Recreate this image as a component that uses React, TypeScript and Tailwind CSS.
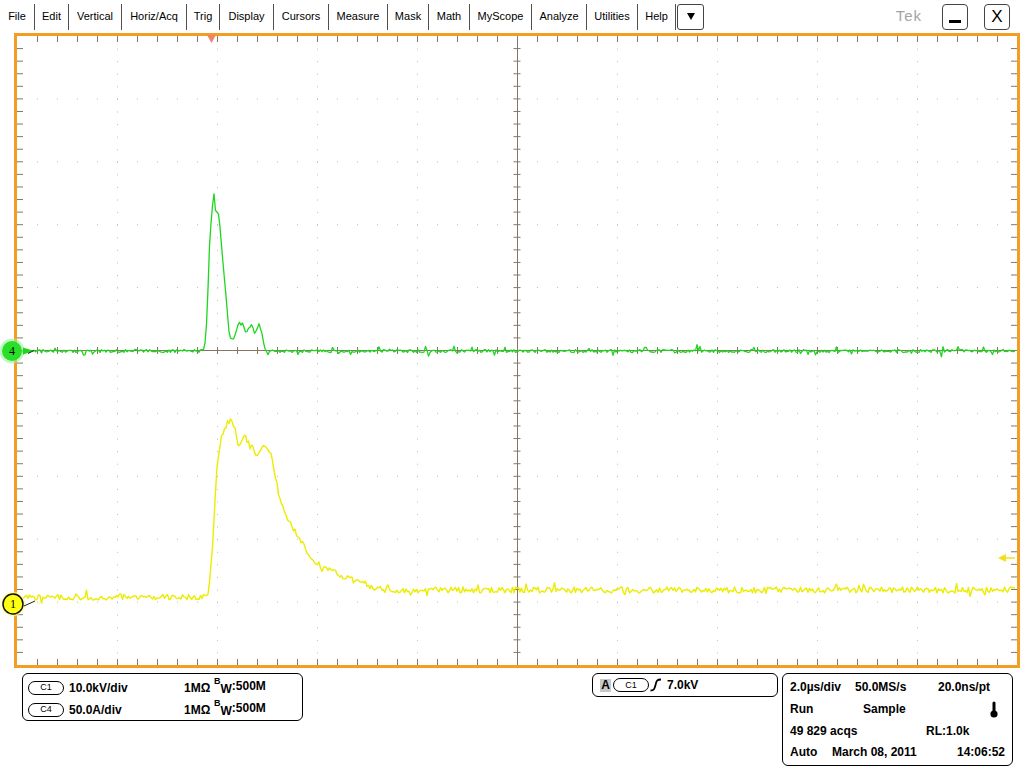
import React from 'react';

// Layout of the scope display (inner graticule area, in px)
const GW = 1000;
const GH = 629;
const OX = 17; // page x of graticule origin
const OY = 36; // page y of graticule origin
const DIV_X = GW / 10;
const DIV_Y = GH / 10;

const MENU: [string, string][] = [
  ['File', 'w-[34px]'],
  ['Edit', 'w-[33px]'],
  ['Vertical', 'w-[52px]'],
  ['Horiz/Acq', 'w-[64px]'],
  ['Trig', 'w-[32px]'],
  ['Display', 'w-[53px]'],
  ['Cursors', 'w-[54px]'],
  ['Measure', 'w-[58px]'],
  ['Mask', 'w-[40px]'],
  ['Math', 'w-[40px]'],
  ['MyScope', 'w-[61px]'],
  ['Analyze', 'w-[54px]'],
  ['Utilities', 'w-[50px]'],
  ['Help', 'w-[37px]'],
];

const rng = (seed: number) => () => {
  seed = (seed + 0x6d2b79f5) | 0;
  let t = Math.imul(seed ^ (seed >>> 15), 1 | seed);
  t = (t + Math.imul(t ^ (t >>> 7), 61 | t)) ^ t;
  return ((t ^ (t >>> 14)) >>> 0) / 4294967296;
};

const interp = (pts: number[][], x: number) => {
  for (let i = 0; i < pts.length - 1; i++) {
    const [x0, y0] = pts[i];
    const [x1, y1] = pts[i + 1];
    if (x >= x0 && x <= x1) return y0 + ((y1 - y0) * (x - x0)) / (x1 - x0);
  }
  return pts[pts.length - 1][1];
};

const greenPulse = [
  [204, 351], [206, 335], [208, 290], [210, 232], [212, 213], [213, 200], [214, 192], [215, 204],
  [216, 214], [218, 209], [220, 228], [222, 253], [225, 285], [227, 310], [229, 330], [231, 340],
  [234, 338], [236, 334], [239, 323], [241, 327], [243, 322], [245, 330], [247, 333], [249, 327],
  [252, 326], [254, 333], [256, 333], [258, 326], [260, 324], [262, 335], [265, 347], [267, 351],
];

const yellowPulse = [
  [207, 597], [209, 590], [211, 565], [213, 540], [215, 500], [217, 467], [219, 450], [221, 440],
  [223, 433], [226, 427], [228, 422], [230, 419], [232, 424], [235, 430], [238, 447], [241, 440],
  [245, 437], [248, 443], [250, 445], [253, 448], [257, 455], [260, 450], [264, 446], [267, 447],
  [270, 452], [272, 455], [274, 470], [278, 490], [282, 507], [286, 515], [290, 523], [295, 532],
  [300, 540], [305, 548], [310, 557], [316, 562], [323, 567], [333, 572], [343, 577], [353, 580],
  [363, 583], [373, 587], [383, 590],
];

const buildGreen = () => {
  const r = rng(41);
  const out: string[] = [];
  for (let x = 22; x <= 1016; x += 1.5) {
    let y: number;
    if (x >= 204 && x <= 267) y = interp(greenPulse, x) + (r() - 0.5) * 4;
    else {
      y = 351 + (r() - 0.5) * 3;
      if (r() < 0.07) y += (r() < 0.6 ? -1 : 1) * (2 + r() * 3);
    }
    out.push(`${(x - OX).toFixed(1)},${(y - OY).toFixed(1)}`);
  }
  return out.join(' ');
};

const buildYellow = () => {
  const r = rng(7);
  const out: string[] = [];
  for (let x = 22; x <= 1016; x += 1.5) {
    let y: number;
    if (x < 207) y = 597;
    else if (x > 383) y = 590;
    else y = interp(yellowPulse, x);
    y += (r() - 0.5) * 6;
    if (r() < 0.1) y += (r() - 0.5) * 11;
    out.push(`${(x - OX).toFixed(1)},${(y - OY).toFixed(1)}`);
  }
  return out.join(' ');
};

const Graticule: React.FC = () => {
  const green = buildGreen();
  const yellow = buildYellow();
  const grid = '#bcbcbc';
  const axis = '#857768';
  const ticks: JSX.Element[] = [];
  for (let m = 1; m < 50; m++) {
    const x = m * 20 + 0.5;
    const y = m * (GH / 50);
    ticks.push(<line key={`t${m}`} x1={x} y1={0} x2={x} y2={6} />);
    ticks.push(<line key={`b${m}`} x1={x} y1={GH - 6} x2={x} y2={GH} />);
    ticks.push(<line key={`l${m}`} x1={0} y1={y} x2={6} y2={y} />);
    ticks.push(<line key={`r${m}`} x1={GW - 6} y1={y} x2={GW} y2={y} />);
    ticks.push(<line key={`cx${m}`} x1={x} y1={GH / 2 - 3.5} x2={x} y2={GH / 2 + 3.5} />);
    ticks.push(<line key={`cy${m}`} x1={GW / 2 - 3.5} y1={y} x2={GW / 2 + 3.5} y2={y} />);
  }
  const dotted: JSX.Element[] = [];
  for (let k = 1; k < 10; k++) {
    if (k === 5) continue;
    dotted.push(
      <line key={`h${k}`} x1={0} y1={k * DIV_Y} x2={GW} y2={k * DIV_Y} strokeDasharray={`1 19`} />,
    );
    dotted.push(
      <line key={`v${k}`} x1={k * DIV_X + 0.5} y1={0} x2={k * DIV_X + 0.5} y2={GH} strokeDasharray={`1 ${GH / 50 - 1}`} />,
    );
  }

  return (
    <svg width={GW} height={GH} viewBox={`0 0 ${GW} ${GH}`} className="block overflow-visible">
      <g stroke={grid} strokeWidth={1}>{dotted}</g>
      <g stroke={axis} strokeWidth={1}>
        <line x1={GW / 2 + 0.5} y1={0} x2={GW / 2 + 0.5} y2={GH} />
        <line x1={0} y1={GH / 2} x2={GW} y2={GH / 2} />
        {ticks}
      </g>
      <polyline points={green} fill="none" stroke="#1fd61f" strokeWidth={1.3} strokeLinejoin="round" />
      <polyline points={yellow} fill="none" stroke="#ecec00" strokeWidth={1.4} strokeLinejoin="round" />
      {/* trigger position */}
      <polygon points="190,-1 199,-1 194.5,7" fill="#f3826c" />
      {/* trigger level */}
      <g>
        <line x1={986} y1={522} x2={998} y2={522} stroke="#f0e020" strokeWidth={1.5} />
        <polygon points="981,522 989,518 989,526" fill="#f0e020" />
      </g>
    </svg>
  );
};

const ChannelMarker: React.FC<{ n: string; fill: string; glow: string; ring?: boolean; arrow: 'green' | 'yellow' }> = ({
  n,
  fill,
  glow,
  ring,
  arrow,
}) => (
  <svg width="40" height="28" viewBox="0 0 40 28" className="block overflow-visible">
    <circle cx="12" cy="14" r="12.5" fill={glow} opacity="0.6" />
    <circle cx="12" cy="14" r="10" fill={fill} stroke={ring ? '#111' : 'none'} strokeWidth={ring ? 1.5 : 0} />
    <text x="12" y="18" textAnchor="middle" fontSize="12" fontFamily="Liberation Serif, serif" fill="#000">
      {n}
    </text>
    {arrow === 'green' ? (
      <g>
        <polygon points="23,10.5 34,14 23,17.5" fill="#1fd61f" />
        <line x1="28" y1="16.5" x2="34" y2="13.5" stroke="#222" strokeWidth="1" />
      </g>
    ) : (
      <line x1="23" y1="16" x2="34" y2="11" stroke="#222" strokeWidth="1" />
    )}
  </svg>
);

const Pill: React.FC<{ label: string }> = ({ label }) => (
  <span className="inline-flex items-center justify-center w-[36px] h-[14px] rounded-full border border-black text-[9px] font-normal leading-none shrink-0">
    {label}
  </span>
);

const BW: React.FC = () => (
  <span className="inline-flex items-start leading-none">
    <span className="text-[9px] mt-[-3px]">B</span>
    <span className="text-[12px] mt-[3px]">W</span>
    <span className="text-[12px]">:500M</span>
  </span>
);

const Thermometer: React.FC = () => (
  <svg width="10" height="17" viewBox="0 0 10 17">
    <rect x="3.5" y="0.5" width="3" height="12" rx="1.5" fill="#000" />
    <circle cx="5" cy="13" r="3.6" fill="#000" />
  </svg>
);

const Slope: React.FC = () => (
  <svg width="12" height="14" viewBox="0 0 12 14">
    <path d="M0.5 12.5 C4 12.5 4.5 11 5.5 7 C6.5 2.5 7 1.5 11 1.5" fill="none" stroke="#000" strokeWidth="1.8" />
  </svg>
);

export default function App() {
  return (
    <div className="w-[1024px] h-[768px] bg-white text-black overflow-hidden font-['Liberation_Sans',Arial,sans-serif]">
      {/* menu bar */}
      <div className="h-[33px] flex items-center text-[11px]">
        {MENU.map(([label, w]) => (
          <React.Fragment key={label}>
            <div className={`${w} text-center`}>{label}</div>
            <div className="w-px h-[26px] bg-[#505050]" />
          </React.Fragment>
        ))}
        <div className="ml-[1px] w-[27px] h-[26px] border-[1.5px] border-[#444] rounded-[3px] flex items-center justify-center">
          <svg width="8" height="7" viewBox="0 0 8 7">
            <polygon points="0,0 8,0 4,7" fill="#000" />
          </svg>
        </div>
        <div className="ml-auto flex items-center mr-[14px]">
          <span className="text-[15px] text-[#a4a4a4] tracking-[1px] mr-[20px]">Tek</span>
          <div className="w-[26px] h-[26px] border-[1.5px] border-[#444] rounded-[4px] flex items-end justify-center pb-[6px]">
            <div className="w-[12px] h-[3px] bg-black" />
          </div>
          <div className="ml-[16px] w-[26px] h-[26px] border-[1.5px] border-[#444] rounded-[4px] flex items-center justify-center text-[17px] leading-none">
            X
          </div>
        </div>
      </div>

      {/* graticule */}
      <div className="relative ml-[14px] w-[1006px] h-[635px] border-[3px] border-[#f39d22]">
        <Graticule />
        <div className="absolute left-[-17px] top-[301px]">
          <ChannelMarker n="4" fill="#28e028" glow="#9cf09c" arrow="green" />
        </div>
        <div className="absolute left-[-16px] top-[554px]">
          <ChannelMarker n="1" fill="#ffff10" glow="#ffff90" ring arrow="yellow" />
        </div>
      </div>

      {/* readouts */}
      <div className="flex items-start mt-[5px] pl-[22px] text-[12px] font-bold">
        <div className="w-[281px] h-[48px] border border-black rounded-[6px] pt-[6px] pl-[5px]">
          <div className="h-[15px] flex items-center">
            <Pill label="C1" />
            <span className="ml-[5px] w-[115px]">10.0kV/div</span>
            <span className="w-[30px]">1MΩ</span>
            <BW />
          </div>
          <div className="h-[15px] mt-[7px] flex items-center">
            <Pill label="C4" />
            <span className="ml-[5px] w-[115px]">50.0A/div</span>
            <span className="w-[30px]">1MΩ</span>
            <BW />
          </div>
        </div>

        <div className="ml-[289px] w-[186px] h-[24px] border border-black rounded-[6px] flex items-center pl-[7px]">
          <span className="w-[11px] h-[13px] bg-[#c8c8c8] flex items-center justify-center leading-none">A</span>
          <span className="ml-[2px] flex">
            <Pill label="C1" />
          </span>
          <span className="ml-[1px] flex">
            <Slope />
          </span>
          <span className="ml-[5px]">7.0kV</span>
        </div>

        <div className="ml-[4px] w-[231px] h-[93px] border border-black rounded-[6px] pt-[2px] pl-[7px] pr-[7px]">
          <div className="h-[22px] flex items-center">
            <span className="w-[65px]">2.0µs/div</span>
            <span className="w-[83px]">50.0MS/s</span>
            <span>20.0ns/pt</span>
          </div>
          <div className="h-[22px] flex items-center">
            <span className="w-[73px]">Run</span>
            <span>Sample</span>
            <span className="ml-auto mr-[6px] flex">
              <Thermometer />
            </span>
          </div>
          <div className="h-[22px] flex items-center">
            <span className="w-[136px]">49 829 acqs</span>
            <span>RL:1.0k</span>
          </div>
          <div className="h-[19px] flex items-center">
            <span className="w-[42px]">Auto</span>
            <span>March 08, 2011</span>
            <span className="ml-auto">14:06:52</span>
          </div>
        </div>
      </div>
    </div>
  );
}
